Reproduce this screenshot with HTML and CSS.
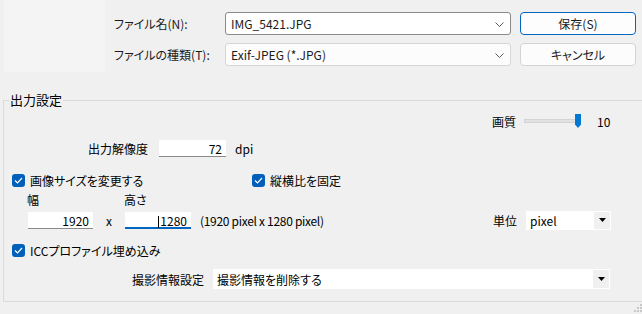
FILE: index.html
```html
<!DOCTYPE html>
<html lang="ja">
<head>
  <meta charset="UTF-8">
  <title>名前を付けて保存</title>
  <link rel="stylesheet" href="styles.css">
</head>
<body>
  <div class="dialog">
    <div class="top">
      <div class="thumb"></div>
      <div class="file-fields">
        <label class="file-label">ファイル名(N):</label>
        <div class="combo combo-active">
          <span>IMG_5421.JPG</span>
          <svg class="chev" width="9" height="5" viewBox="0 0 9 5"><path d="M0.5 0.5 L4.5 4.5 L8.5 0.5" fill="none" stroke="#5c5c5c" stroke-width="1"/></svg>
        </div>
        <button class="btn btn-primary">保存(S)</button>

        <label class="file-label">ファイルの種類(T):</label>
        <div class="combo">
          <span>Exif-JPEG (*.JPG)</span>
          <svg class="chev" width="9" height="5" viewBox="0 0 9 5"><path d="M0.5 0.5 L4.5 4.5 L8.5 0.5" fill="none" stroke="#5c5c5c" stroke-width="1"/></svg>
        </div>
        <button class="btn">キャンセル</button>
      </div>
    </div>

    <fieldset class="group">
      <legend>出力設定</legend>

      <div class="row row-quality">
        <span class="lbl">画質</span>
        <div class="slider">
          <div class="thumb-knob"></div>
        </div>
        <span class="quality-val">10</span>
      </div>

      <div class="row row-res">
        <span class="lbl res-lbl">出力解像度</span>
        <div class="field res-field">72</div>
        <span>dpi</span>
      </div>

      <div class="row row-check">
        <label class="check check-first"><span class="box"><svg width="9" height="7" viewBox="0 0 9 7"><path d="M1 3.5 L3.5 6 L8 1" fill="none" stroke="#fff" stroke-width="1.2"/></svg></span>画像サイズを変更する</label>
        <label class="check"><span class="box"><svg width="9" height="7" viewBox="0 0 9 7"><path d="M1 3.5 L3.5 6 L8 1" fill="none" stroke="#fff" stroke-width="1.2"/></svg></span>縦横比を固定</label>
      </div>

      <div class="row row-caps">
        <span class="cap-w">幅</span>
        <span class="cap-h">高さ</span>
      </div>

      <div class="row row-size">
        <div class="field size-w">1920</div>
        <span class="times">x</span>
        <div class="field size-h focused"><span class="caret"></span>1280</div>
        <span class="pixel-note">(1920 pixel x 1280 pixel)</span>
        <span class="lbl unit-lbl">単位</span>
        <div class="select unit-select">
          <span>pixel</span>
          <span class="drop"><svg width="7" height="4" viewBox="0 0 7 4"><path d="M0 0 H7 L3.5 4 Z" fill="#000"/></svg></span>
        </div>
      </div>

      <div class="row row-icc">
        <label class="check"><span class="box"><svg width="9" height="7" viewBox="0 0 9 7"><path d="M1 3.5 L3.5 6 L8 1" fill="none" stroke="#fff" stroke-width="1.2"/></svg></span>ICCプロファイル埋め込み</label>
      </div>

      <div class="row row-exif">
        <span class="lbl exif-lbl">撮影情報設定</span>
        <div class="select exif-select">
          <span>撮影情報を削除する</span>
          <span class="drop"><svg width="7" height="4" viewBox="0 0 7 4"><path d="M0 0 H7 L3.5 4 Z" fill="#000"/></svg></span>
        </div>
      </div>
    </fieldset>

    <svg class="grip" width="9" height="11" viewBox="0 0 9 11">
      <rect x="7" y="1" width="2" height="2" fill="#c8c8c8"/>
      <rect x="4" y="4" width="2" height="2" fill="#c8c8c8"/>
      <rect x="7" y="4" width="2" height="2" fill="#c8c8c8"/>
      <rect x="1" y="7" width="2" height="2" fill="#c8c8c8"/>
      <rect x="4" y="7" width="2" height="2" fill="#c8c8c8"/>
      <rect x="7" y="7" width="2" height="2" fill="#c8c8c8"/>
    </svg>
  </div>
</body>
</html>
```

FILE: styles.css
```css
* {
  box-sizing: border-box;
}

body {
  margin: 0;
  background: #f0f0f0;
  font-family: "Noto Sans CJK JP", "Noto Sans", sans-serif;
  font-size: 12px;
  font-feature-settings: "palt";
  color: #000;
  overflow: hidden;
}

.dialog {
  position: relative;
  width: 642px;
  height: 314px;
}

/* top file area */
.top {
  display: flex;
  height: 93px;
  padding-left: 4px;
}

.thumb {
  width: 101px;
  height: 72px;
  background: #f4f4f4;
}

.file-fields {
  display: grid;
  grid-template-columns: 102px 286px 116px;
  grid-auto-rows: 23px;
  column-gap: 9px;
  row-gap: 8px;
  margin-left: 9px;
  padding-top: 12px;
}

.file-label {
  display: flex;
  align-items: center;
  color: #1b1b1b;
}

.combo {
  display: flex;
  align-items: center;
  justify-content: space-between;
  padding: 0 6px 0 5px;
  background: #fcfcfc;
  border: 1px solid #d6d6d6;
  border-radius: 3px;
  color: #1b1b1b;
}

.combo-active {
  background: #fff;
  border-color: #8a8a8a;
}

.chev {
  margin-top: 1px;
}

.btn {
  font: inherit;
  color: #1b1b1b;
  background: #fcfcfc;
  border: 1px solid #d3d3d3;
  border-radius: 4px;
  padding: 0;
}

.btn-primary {
  border-color: #0067c0;
  background: #fdfdfd;
}

/* output settings group */
.group {
  margin: 0 -8px 0 3px;
  padding: 0 0 11px 0;
  border: 1px solid #dadada;
}

.group legend {
  margin-left: 5px;
  padding: 0 1px;
  font-size: 13px;
  line-height: 14px;
}

.row {
  display: flex;
  align-items: center;
}

.row-quality {
  height: 22px;
  margin-top: 3px;
  padding-left: 488px;
}

.slider {
  position: relative;
  width: 57px;
  height: 4px;
  margin-left: 8px;
  background: #e2e2e2;
  border: 1px solid #d4d4d4;
}

.thumb-knob {
  position: absolute;
  right: -1px;
  top: -6px;
  width: 6px;
  height: 14px;
  background: #0078d4;
  clip-path: polygon(0 0, 100% 0, 100% 75%, 50% 100%, 0 75%);
}

.quality-val {
  margin-left: 16px;
}

.row-res {
  height: 22px;
  margin-top: 5px;
  padding-left: 84px;
}

.field {
  height: 17px;
  background: #fff;
  border-bottom: 1px solid #8a8a8a;
  text-align: right;
  padding-right: 4px;
  line-height: 17px;
}

.res-field {
  width: 67px;
  margin: 0 9px 0 11px;
}

.row-check {
  height: 18px;
  margin-top: 12px;
  padding-left: 8px;
}

.check {
  display: flex;
  align-items: center;
  gap: 5px;
}

.check-first {
  width: 240px;
}

.box {
  display: flex;
  align-items: center;
  justify-content: center;
  width: 13px;
  height: 13px;
  background: #005fb8;
  border-radius: 3px;
}

.row-caps {
  height: 16px;
  margin-top: 2px;
  padding-left: 23px;
}

.cap-w {
  width: 97px;
}

.row-size {
  height: 20px;
  margin-top: 3px;
  padding-left: 24px;
}

.size-w {
  width: 65px;
}

.times {
  width: 32px;
  text-align: center;
}

.size-h {
  width: 66px;
  border-bottom: 2px solid #0067c0;
}

.caret {
  display: inline-block;
  width: 1px;
  height: 12px;
  margin-right: 1px;
  background: #000;
  vertical-align: -2px;
}

.pixel-note {
  margin-left: 9px;
  width: 293px;
  letter-spacing: -0.3px;
}

.select {
  display: flex;
  align-items: center;
  justify-content: space-between;
  background: #fff;
  border: 1px solid #fff;
  padding-left: 3px;
}

.drop {
  display: flex;
  align-items: center;
  justify-content: center;
  width: 16px;
  height: 100%;
  background: #f0f0f0;
}

.unit-select {
  width: 85px;
  height: 19px;
  margin-left: 9px;
}

.row-icc {
  height: 18px;
  margin-top: 11px;
  padding-left: 8px;
}

.row-exif {
  height: 22px;
  margin-top: 9px;
  padding-left: 128px;
}

.exif-select {
  width: 397px;
  height: 20px;
  margin-left: 9px;
}

.grip {
  position: absolute;
  right: 0;
  bottom: 0;
}
```
